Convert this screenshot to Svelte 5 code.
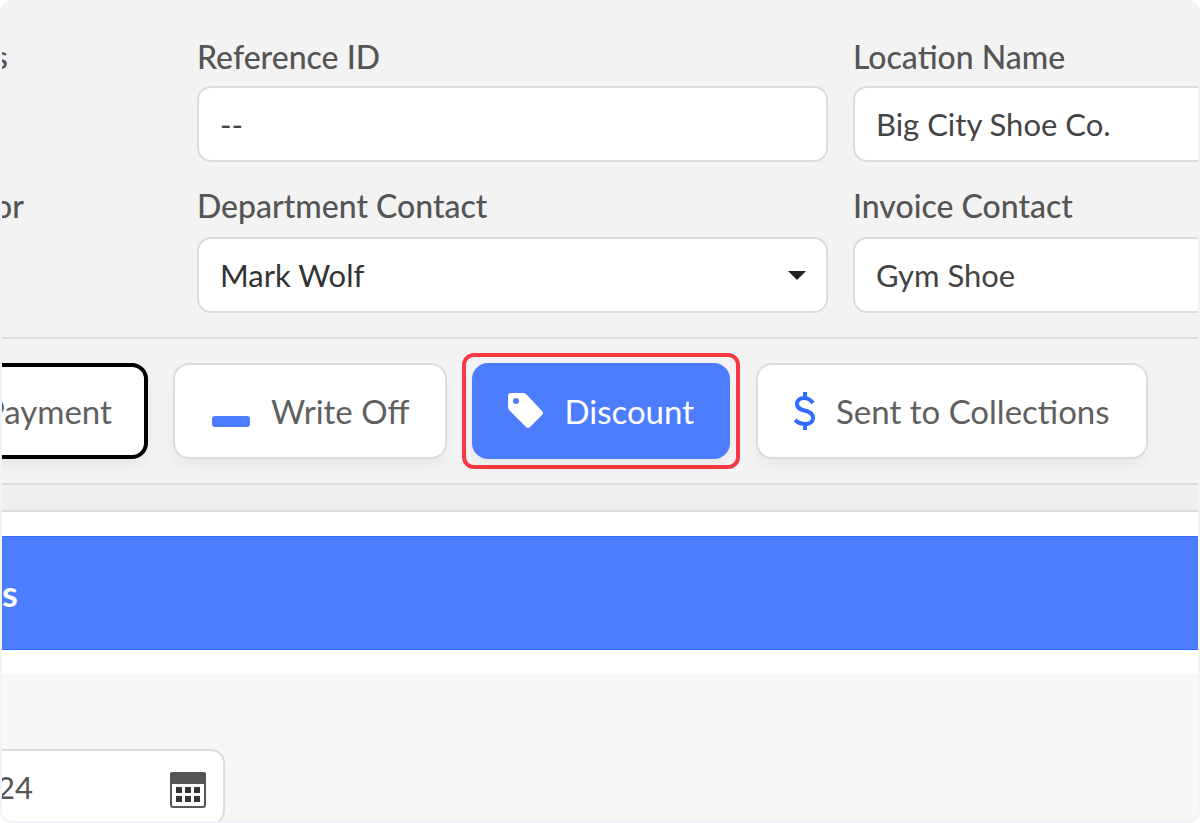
<script>
    let referenceId = $state('--');
    let departmentContact = $state('Mark Wolf');
    let locationName = $state('Big City Shoe Co.');
    let invoiceContact = $state('Gym Shoe');
    let day = $state('24');
</script>

<main class="frame">
    <section class="details">
        <div class="edge-column">
            <span class="label edge-label short">s</span>
            <span class="label edge-label">or</span>
        </div>

        <div class="column">
            <label class="label" for="reference-id">Reference ID</label>
            <input id="reference-id" class="field" type="text" bind:value={referenceId} />

            <label class="label" for="department-contact">Department Contact</label>
            <div class="select-wrap">
                <select id="department-contact" class="field" bind:value={departmentContact}>
                    <option>Mark Wolf</option>
                </select>
                <svg class="caret" width="18" height="9" viewBox="0 0 18 9" aria-hidden="true">
                    <path d="M0 0H18L9 9Z" fill="#222" />
                </svg>
            </div>
        </div>

        <div class="column bleed">
            <label class="label" for="location-name">Location Name</label>
            <input id="location-name" class="field" type="text" bind:value={locationName} />

            <label class="label" for="invoice-contact">Invoice Contact</label>
            <input id="invoice-contact" class="field" type="text" bind:value={invoiceContact} />
        </div>
    </section>

    <section class="actions">
        <button class="action payment">Payment</button>

        <button class="action write-off">
            <svg width="40" height="36" viewBox="0 0 40 36" aria-hidden="true">
                <rect x="1" y="23" width="38" height="11" rx="3" fill="#4d7dff" />
            </svg>
            Write Off
        </button>

        <div class="highlight">
            <button class="action primary">
                <svg width="36" height="36" viewBox="0 0 36 36" aria-hidden="true">
                    <path fill="#fff" fill-rule="evenodd" d="M3 0H15Q17 0 19 2L34 18Q36 20 34 22L22 34Q20 36 18 34L2 18Q0 16 0 14V3Q0 0 3 0ZM8 5A3 3 0 1 0 8 11A3 3 0 1 0 8 5Z" />
                </svg>
                Discount
            </button>
        </div>

        <button class="action collections">
            <svg width="22" height="38" viewBox="0 0 22 38" aria-hidden="true">
                <path fill="none" stroke="#2f6bff" stroke-width="4" d="M11 0V6M11 32V38M19 11C16 7 13 6 10 6C6 6 3 8 3 12C3 21 19 16 19 26C19 30 15 32 11 32C7 32 4 31 1 28" />
            </svg>
            Sent to Collections
        </button>
    </section>

    <div class="divider"></div>

    <section class="heading">
        <h2>s</h2>
    </section>

    <section class="date">
        <div class="date-field">
            <input type="text" aria-label="Date" bind:value={day} />
            <button class="calendar" aria-label="Open calendar">
                <svg width="36" height="36" viewBox="0 0 36 36" aria-hidden="true">
                    <rect x="1" y="1" width="34" height="34" rx="2" fill="#fff" stroke="#555" stroke-width="2" />
                    <path fill="#555" d="M0 3Q0 0 3 0H33Q36 0 36 3V12H0Z" />
                    <path fill="#333" d="M6 15H12V21H6ZM15 15H21V21H15ZM24 15H30V21H24ZM6 24H12V30H6ZM15 24H21V30H15ZM24 24H30V30H24Z" />
                </svg>
            </button>
        </div>
    </section>
</main>

<style>
    :global(body) {
        margin: 0;
        background: #fff;
    }

    .frame,
    .frame * {
        box-sizing: border-box;
    }

    .frame {
        height: 100vh;
        overflow: hidden;
        border: 2px solid #f2f2f8;
        border-radius: 12px;
        background: #f7f7f7;
        color: #555;
        font-family: Lato, sans-serif;
        font-size: 31px;
        line-height: 40px;
    }

    input,
    select,
    button {
        margin: 0;
        font: inherit;
        color: inherit;
    }

    /* Invoice details */
    .details {
        display: grid;
        grid-template-columns: 170px 64fr 35fr;
        column-gap: 25px;
        padding: 35px 0 24px;
        background: #f3f3f3;
        border-bottom: 2px solid #dcdcdc;
    }

    .column {
        display: flex;
        flex-direction: column;
        min-width: 0;
    }

    .bleed {
        margin-right: -24px;
    }

    .label {
        height: 40px;
        margin-bottom: 9px;
        font-size: 32px;
        font-weight: 500;
        white-space: nowrap;
    }

    .edge-column {
        display: flex;
        flex-direction: column;
        gap: 100px;
    }

    .edge-label {
        display: flex;
        justify-content: flex-end;
        width: 22px;
    }

    .edge-label.short {
        width: 6px;
    }

    .field {
        width: 100%;
        height: 76px;
        padding: 0 21px;
        border: 2px solid #dcdcdc;
        border-radius: 14px;
        background: #fff;
        color: #444;
    }

    .column > .field + .label {
        margin-top: 24px;
        margin-bottom: 11px;
    }

    .select-wrap {
        position: relative;
    }

    .select-wrap select {
        display: block;
        appearance: none;
        color: #333;
    }

    .caret {
        position: absolute;
        top: 34px;
        right: 22px;
        pointer-events: none;
    }

    /* Action buttons */
    .actions {
        display: flex;
        align-items: center;
        padding: 14px 0;
        background: #f3f3f3;
        border-bottom: 2px solid #dcdcdc;
        font-size: 33px;
    }

    .action {
        display: flex;
        flex: none;
        align-items: center;
        justify-content: center;
        gap: 20px;
        height: 96px;
        padding: 0 36px;
        border: 2px solid #dcdcdc;
        border-radius: 16px;
        background: #fff;
        box-shadow: 0 8px 12px rgba(0, 0, 0, 0.04);
        color: #606060;
        white-space: nowrap;
    }

    .payment {
        margin-left: -53px;
        padding: 0 32px;
        border: 4px solid #000;
    }

    .write-off {
        margin-left: 25px;
    }

    .highlight {
        margin-left: 15px;
        padding: 6px;
        border: 4px solid #f93844;
        border-radius: 12px;
    }

    .primary {
        padding: 0 34px;
        border-color: #4d7dff;
        background: #4d7dff;
        color: #fff;
    }

    .collections {
        margin-left: 16px;
    }

    .divider {
        height: 27px;
        background: #efefef;
        border-bottom: 2px solid #dcdcdc;
    }

    .heading {
        padding: 24px 0;
        background: #fff;
    }

    .heading h2 {
        display: flex;
        align-items: center;
        height: 114px;
        margin: 0;
        border: solid #2f6dff;
        border-width: 1px 0;
        background: #4d7dff;
        color: #fff;
        font-size: 36px;
        font-weight: 700;
    }

    /* Date */
    .date {
        padding-top: 75px;
    }

    .date-field {
        display: flex;
        align-items: center;
        width: 247px;
        height: 76px;
        margin-left: -24px;
        padding: 0 17px;
        border: 2px solid #dcdcdc;
        border-radius: 14px;
        background: #fff;
    }

    .date-field input {
        flex: 1;
        min-width: 0;
        padding: 0;
        border: 0;
        background: none;
    }

    .calendar {
        display: flex;
        padding: 6px 0 0;
        border: 0;
        background: none;
    }
</style>
